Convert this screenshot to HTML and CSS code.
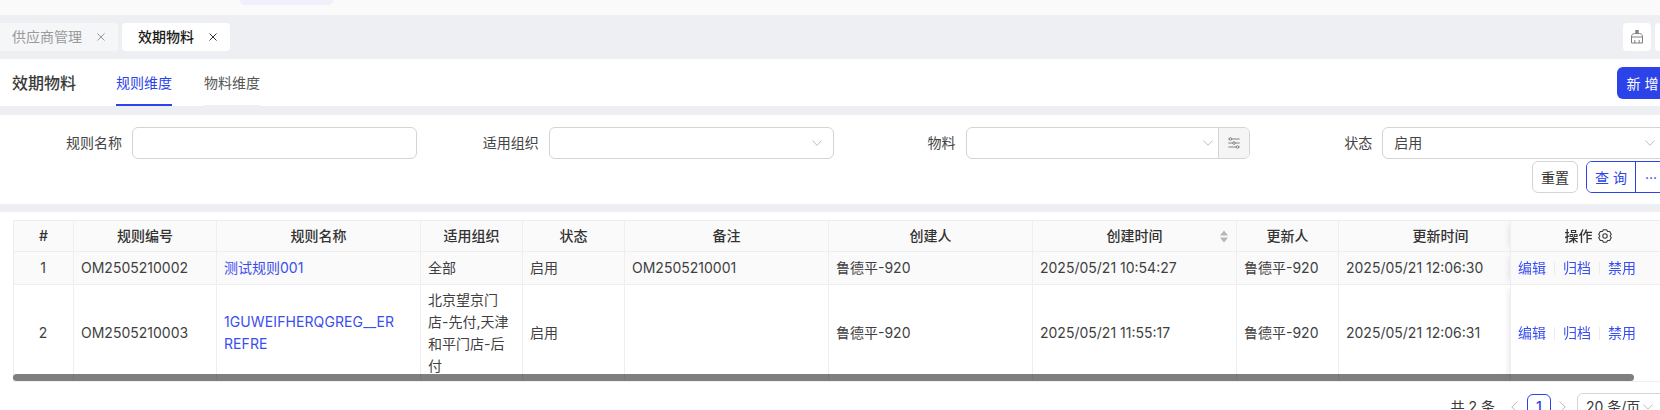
FILE: index.html
```html
<!DOCTYPE html>
<html lang="zh-CN">
<head>
<meta charset="utf-8">
<title>效期物料</title>
<link rel="stylesheet" href="styles.css">
</head>
<body>
<div class="app">
  <div class="topbar"><div class="pill"></div></div>

  <div class="tabbar">
    <div class="tab tab-first"><span>供应商管理</span><svg class="close" viewBox="0 0 8 8"><path d="M.5.5l7 7M7.5.5l-7 7"/></svg></div>
    <div class="tab tab-active"><span>效期物料</span><svg class="close" viewBox="0 0 8 8"><path d="M.5.5l7 7M7.5.5l-7 7"/></svg></div>
    <div class="tab-tools">
      <div class="tool"><svg class="broom" viewBox="0 0 14 14"><path class="broom-handle" d="M5.300 0h3.400v3.500H5.300z"/><path d="M1.500 7c0-2.300 1-3.400 3-3.400h5c2 0 3 1.100 3 3.400zM1.500 7v6h11V7M4.800 13V10M9.200 13V10"/></svg></div>
      <div class="tool"></div>
    </div>
  </div>

  <div class="headrow">
    <h1 class="title">效期物料</h1>
    <nav class="subtabs">
      <a class="subtab subtab-active">规则维度</a>
      <a class="subtab">物料维度</a>
    </nav>
    <button class="btn-new">新 增</button>
  </div>

  <div class="divider divider-a"></div>

  <section class="filter">
    <div class="filter-grid">
      <div class="field">
        <label class="field-label">规则名称</label>
        <div class="control"></div>
      </div>
      <div class="field">
        <label class="field-label">适用组织</label>
        <div class="control control-select"><svg class="chev" viewBox="0 0 10 6"><path d="M.4.5L5 5.3 9.6.5"/></svg></div>
      </div>
      <div class="field">
        <label class="field-label">物料</label>
        <div class="control control-select control-addon">
          <svg class="chev" viewBox="0 0 10 6"><path d="M.4.5L5 5.3 9.6.5"/></svg>
          <span class="addon"><svg class="sliders" viewBox="0 0 12 12"><path d="M.3 2h11.400M.3 6h11.400M.3 10h11.400"/><circle cx="2.500" cy="2" r="1.300"/><circle cx="6" cy="6" r="1.300"/><circle cx="9.500" cy="10" r="1.300"/></svg></span>
        </div>
      </div>
      <div class="field">
        <label class="field-label">状态</label>
        <div class="control control-select"><span class="value">启用</span><svg class="chev" viewBox="0 0 10 6"><path d="M.4.5L5 5.3 9.6.5"/></svg></div>
      </div>
    </div>
    <div class="filter-actions">
      <button class="btn-reset">重置</button>
      <div class="btn-group">
        <button class="btn-query">查 询</button>
        <button class="btn-more">···</button>
      </div>
    </div>
  </section>

  <div class="divider divider-b"></div>

  <section class="table-area">
    <div class="table-wrap">
      <table class="grid">
        <colgroup>
          <col class="c-61"><col class="c-143"><col class="c-204"><col class="c-102"><col class="c-102"><col class="c-204"><col class="c-204"><col class="c-204"><col class="c-102"><col class="c-204"><col class="c-156">
        </colgroup>
        <thead>
          <tr>
            <th>#</th><th>规则编号</th><th>规则名称</th><th>适用组织</th><th>状态</th><th>备注</th><th>创建人</th>
            <th class="sortable">创建时间<svg class="sort" viewBox="0 0 8 13"><path d="M4 .5L8 5.500H0zM4 12.500L0 7.500h8z"/></svg></th>
            <th>更新人</th><th>更新时间</th>
            <th class="fixed">操作<svg class="gear" viewBox="0 0 14 14"><path d="M5.430.69H8.570L9.600 2.500 11.680 2.480 13.250 5.210 12.200 7 13.250 8.790 11.680 11.520 9.600 11.500 8.570 13.310H5.430L4.400 11.500 2.320 11.520.75 8.790 1.800 7 .75 5.210 2.320 2.480 4.400 2.500Z"/><circle cx="7" cy="7" r="2.200"/></svg></th>
          </tr>
        </thead>
        <tbody>
          <tr class="row-hover">
            <td class="center">1</td>
            <td>OM2505210002</td>
            <td><a class="link">测试规则001</a></td>
            <td>全部</td>
            <td>启用</td>
            <td>OM2505210001</td>
            <td>鲁德平-920</td>
            <td>2025/05/21 10:54:27</td>
            <td>鲁德平-920</td>
            <td>2025/05/21 12:06:30</td>
            <td class="fixed"><div class="ops"><a class="link">编辑</a><i></i><a class="link">归档</a><i></i><a class="link">禁用</a></div></td>
          </tr>
          <tr class="row-tall">
            <td class="center">2</td>
            <td>OM2505210003</td>
            <td><a class="link link-wrap">1GUWEIFHERQGREG__ERREFRE</a></td>
            <td>北京望京门店-先付,天津和平门店-后付</td>
            <td>启用</td>
            <td></td>
            <td>鲁德平-920</td>
            <td>2025/05/21 11:55:17</td>
            <td>鲁德平-920</td>
            <td>2025/05/21 12:06:31</td>
            <td class="fixed"><div class="ops"><a class="link">编辑</a><i></i><a class="link">归档</a><i></i><a class="link">禁用</a></div></td>
          </tr>
        </tbody>
      </table>
      <div class="scroll-thumb"></div>
    </div>
    <div class="pager">
      <span class="total">共 2 条</span>
      <svg class="arrow arrow-off" viewBox="0 0 7 12"><path d="M6.500.5L.8 6l5.700 5.500"/></svg>
      <span class="page">1</span>
      <svg class="arrow arrow-off" viewBox="0 0 7 12"><path d="M.5.5L6.200 6 .5 11.500"/></svg>
      <div class="size"><span>20 条/页</span><svg class="chev" viewBox="0 0 10 6"><path d="M.4.5L5 5.3 9.6.5"/></svg></div>
    </div>
  </section>
</div>
</body>
</html>
```

FILE: styles.css
```css
* { box-sizing: border-box; }
html, body { margin: 0; padding: 0; height: 410px; overflow: hidden; background: #fff; }
body { font-family: Inter, "Noto Sans CJK SC", sans-serif; font-size: 14px; color: #3a3a3a; line-height: 22px; }
button { font-family: inherit; font-size: 14px; cursor: pointer; padding: 0; }
a { text-decoration: none; }

.app { width: 1678px; display: flex; flex-direction: column; }

.topbar { height: 15px; background: #fafafa; padding-left: 240px; }
.pill { width: 93px; height: 5px; background: #f0f0fb; border-radius: 0 0 14px 14px; }

.tabbar { height: 44px; background: #eeeff3; display: flex; align-items: center; gap: 4px; }
.tab { height: 28px; display: flex; align-items: center; gap: 15px; border-radius: 4px; background: #f5f6f8; color: #9a9a9a; padding: 0 13px 0 12px; }
.tab-first { border-radius: 0 4px 4px 0; }
.tab-active { background: #fff; color: #1a1a1a; font-weight: 500; padding-left: 16px; }
.close { width: 8px; height: 8px; fill: none; stroke: #999; stroke-width: 1; }
.tab-active .close { stroke: #333; }
.tab-tools { margin-left: auto; display: flex; gap: 4px; width: 55px; }
.tool { width: 28px; height: 28px; flex: none; background: #fff; border-radius: 4px; display: flex; align-items: center; justify-content: center; }
.broom { width: 14px; height: 14px; fill: none; stroke: #808080; stroke-width: 1; }
.broom-handle { fill: #808080; stroke: none; }

.headrow { height: 47px; display: flex; align-items: center; padding: 0 10px 0 12px; }
.title { margin: 0; width: 104px; font-size: 16px; font-weight: 500; color: #3a3a3a; line-height: 24px; }
.subtabs { display: flex; height: 47px; align-items: stretch; }
.subtab { display: flex; align-items: center; padding-top: 2px; color: #555; border-bottom: 1px solid #eeeff3; height: 46.500px; }
.subtab-active { position: relative; color: #2d43ea; padding-right: 32px; border-bottom: none; }
.subtab-active::after { content: ""; position: absolute; left: 0; width: 56px; bottom: 0; height: 2px; background: #2d43ea; }
.btn-new { margin-left: auto; width: 51px; height: 32px; border: none; border-radius: 6px; background: #2d43ea; color: #fff; }

.divider { background: #eeeff3; }
.divider-a { height: 9px; }
.divider-b { height: 8px; }

.filter { height: 89px; padding: 12px 11px 0 0; display: flex; flex-direction: column; }
.filter-grid { display: grid; grid-template-columns: repeat(4, 1fr); }
.field { display: flex; align-items: center; }
.field-label { width: 122px; margin-right: 10px; text-align: right; color: #444; }
.control { flex: 1; height: 32px; border: 1px solid #d4d4d4; border-radius: 6px; display: flex; align-items: center; justify-content: flex-end; padding: 0 11px; }
.value { margin-right: auto; color: #444; }
.chev { width: 10px; height: 6px; fill: none; stroke: #bdbdbd; stroke-width: 1; flex: none; }
.control-addon { padding-right: 0; }
.addon { width: 31px; height: 30px; margin-left: 5px; background: #f5f5f5; border-left: 1px solid #d4d4d4; border-radius: 0 5px 5px 0; display: flex; align-items: center; justify-content: center; }
.sliders { width: 12px; height: 12px; fill: #f5f5f5; stroke: #777; stroke-width: .9; }

.filter-actions { display: flex; justify-content: flex-end; gap: 8px; margin-top: 2px; }
.btn-reset { width: 46px; height: 32px; background: #fff; border: 1px solid #d4d4d4; border-radius: 6px; color: #333; }
.btn-group { display: flex; width: 81px; height: 32px; border: 1px solid #2d43ea; border-radius: 6px; overflow: hidden; }
.btn-query { width: 49px; border: none; border-right: 1px solid #2d43ea; background: #fff; color: #2d43ea; }
.btn-more { flex: 1; border: none; background: #fff; color: #2d43ea; font-size: 14px; text-align: left; padding-left: 9px; }

.table-area { padding: 8px 12px 0 13px; }
.table-wrap { position: relative; overflow: hidden; height: 162px; border-bottom: 1px solid #f0f0f0; }
.grid { border-collapse: separate; border-spacing: 0; table-layout: fixed; width: 1686px; }
.c-61 { width: 61px; } .c-143 { width: 143px; } .c-204 { width: 204px; } .c-102 { width: 102px; } .c-156 { width: 156px; }
.grid th { height: 32px; padding: 0 8px; background: #fafafa; font-weight: 500; color: #333; text-align: center; border-top: 1px solid #eee; border-right: 1px solid #eee; border-bottom: 1px solid #eee; }
.grid td { padding: 5px 8px 5px 7px; border-right: 1px solid #eee; border-bottom: 1px solid #eee; vertical-align: middle; word-break: break-all; color: #3f3f3f; }
.grid th:first-child, .grid td:first-child { border-left: 1px solid #eee; }
.grid .row-tall td { padding-top: 4px; padding-bottom: 4px; }
.row-hover td { background: #fafafa; }
.center { text-align: center; }
.link { color: #3a4eee; }
.link-wrap { display: inline-block; width: 176px; letter-spacing: .1px; }
.grid .sortable { position: relative; }
.sort { position: absolute; right: 8px; top: 9px; width: 8px; height: 13px; fill: #b5b5b5; }
.grid .fixed { position: sticky; right: 0; background: #fff; border-left: 1px solid #eee; box-shadow: -5px 0 6px -4px rgba(0,0,0,.1); }
.grid th.fixed, .row-hover td.fixed { background: #fafafa; }
.gear { width: 14px; height: 14px; margin-left: 5px; vertical-align: -2px; fill: none; stroke: #3a3a3a; stroke-width: 1.1; stroke-linejoin: round; }
.ops { display: flex; align-items: center; gap: 8px; }
.ops i { width: 1px; height: 13px; background: #ececec; }

.scroll-thumb { position: absolute; left: 0; bottom: 0; width: 1621px; height: 7px; border-radius: 4px; background: rgba(0,0,0,.5); }

.pager { display: flex; align-items: center; justify-content: flex-end; height: 28px; margin-top: 11px; }
.total { margin-right: 16px; }
.arrow { width: 7px; height: 12px; fill: none; stroke: #bbb; stroke-width: 1; }
.page { width: 24px; height: 26px; margin: 0 8px 0 9px; border: 1px solid #2d43ea; border-radius: 6px; color: #2d43ea; text-align: center; line-height: 24px; font-weight: 500; }
.size { width: 89px; height: 28px; margin-left: 11px; border: 1px solid #d4d4d4; border-radius: 6px; display: flex; align-items: center; padding-left: 8px; gap: 3px; }
```
